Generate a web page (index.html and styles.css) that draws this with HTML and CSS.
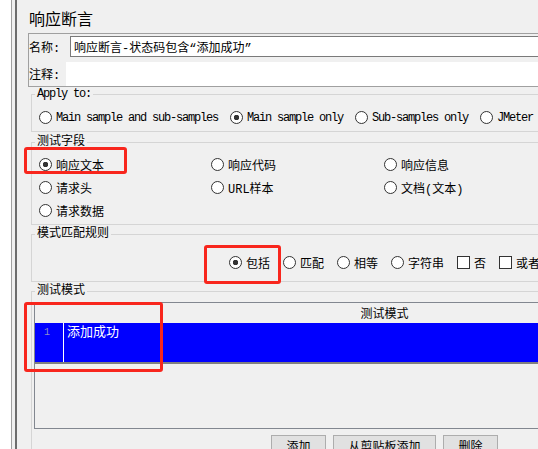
FILE: index.html
```html
<!DOCTYPE html>
<html lang="zh-CN">

<head>
    <meta charset="UTF-8">
    <meta name="viewport" content="width=device-width, initial-scale=1.0">
    <title>响应断言</title>

    <link rel="stylesheet" href="styles.css">
</head>

<body>
    <div class="window">
        <div class="main">
            <div class="content">
                <div class="title">响应断言</div>

                <div class="name-panel">
                    <div class="field-row name-row">
                        <label class="field-label">名称:</label>
                        <input class="name-input" type="text" value="响应断言-状态码包含“添加成功”" readonly>
                    </div>
                    <div class="field-row comment-row">
                        <label class="field-label">注释:</label>
                        <div class="comment-box"></div>
                    </div>
                </div>

                <fieldset class="group apply-group">
                    <legend class="mono">Apply to:</legend>
                    <div class="apply-row mono">
                        <label class="opt"><input type="radio" name="scope">Main sample and sub-samples</label>
                        <label class="opt"><input type="radio" name="scope" checked>Main sample only</label>
                        <label class="opt"><input type="radio" name="scope">Sub-samples only</label>
                        <label class="opt"><input type="radio" name="scope">JMeter Variable Name to use</label>
                    </div>
                </fieldset>

                <fieldset class="group field-group">
                    <legend>测试字段</legend>
                    <div class="field-grid">
                        <label class="opt"><input type="radio" name="field" checked>响应文本</label>
                        <label class="opt"><input type="radio" name="field">响应代码</label>
                        <label class="opt"><input type="radio" name="field">响应信息</label>
                        <label class="opt"><input type="radio" name="field">请求头</label>
                        <label class="opt"><input type="radio" name="field">URL样本</label>
                        <label class="opt"><input type="radio" name="field">文档(文本)</label>
                        <label class="opt"><input type="radio" name="field">请求数据</label>
                    </div>
                </fieldset>

                <fieldset class="group rule-group">
                    <legend>模式匹配规则</legend>
                    <div class="rule-row">
                        <label class="opt"><input type="radio" name="rule" checked>包括</label>
                        <label class="opt"><input type="radio" name="rule">匹配</label>
                        <label class="opt"><input type="radio" name="rule">相等</label>
                        <label class="opt"><input type="radio" name="rule">字符串</label>
                        <label class="opt"><input type="checkbox">否</label>
                        <label class="opt"><input type="checkbox">或者</label>
                    </div>
                </fieldset>

                <fieldset class="group test-group">
                    <legend>测试模式</legend>
                    <div class="table-wrap">
                        <div class="table-head">测试模式</div>
                        <div class="editor">
                            <div class="gutter">1</div>
                            <div class="code">添加成功</div>
                        </div>
                    </div>
                    <div class="button-row">
                        <div class="btn btn-small">添加</div>
                        <div class="btn btn-wide">从剪贴板添加</div>
                        <div class="btn btn-small">删除</div>
                    </div>
                </fieldset>
            </div>
        </div>
    </div>

    <!-- 标注框 -->
    <div class="mark mark-field"></div>
    <div class="mark mark-rule"></div>
    <div class="mark mark-pattern"></div>
</body>

</html>
```

FILE: styles.css
```css
html,
body {
    margin: 0;
    height: 100%;
    overflow: hidden;
    background-color: white;
}

body {
    position: relative;
    font-family: "Liberation Mono", "Noto Sans CJK SC", monospace;
    font-size: 12px;
    color: #000;
}

.window {
    margin-left: 11px;
    border-left: 1px solid #a0a0a0;
    padding-left: 3px;
    height: 449px;
    background-color: #f0f0f0;
    overflow: hidden;
}

.main {
    height: 100%;
    border-left: 2px solid #6d6d6d;
    padding-left: 11px;
    background-color: #f0f0f0;
}

.content {
    width: 760px;
}

.title {
    height: 33px;
    box-sizing: border-box;
    padding: 3px 0 0 1px;
    line-height: 30px;
    font-family: "Noto Sans CJK SC", sans-serif;
    font-size: 16px;
}

/* 名称 / 注释 */
.name-panel {
    border: 1px solid #a0a0a0;
    padding-top: 1px;
}

.field-row {
    display: flex;
    align-items: center;
}

.name-row {
    margin-top: 1px;
    height: 21px;
}

.name-row .field-label {
    width: 41px;
}

.name-input {
    flex: 1;
    height: 21px;
    box-sizing: border-box;
    margin: 0;
    padding: 0 3px;
    border: 1px solid #7a7a7a;
    background-color: white;
    font: inherit;
    outline: none;
}

.comment-row {
    margin-top: 5px;
    height: 24px;
}

.comment-row .field-label {
    width: 37px;
}

.comment-box {
    flex: 1;
    height: 24px;
    background-color: white;
}

/* titled groups */
.group {
    margin: 0 0 0 3px;
    padding: 0;
    min-width: 0;
    border: 1px solid #d5d5d5;
}

.group legend {
    margin-left: 3px;
    padding: 0 2px;
    height: 12px;
    line-height: 12px;
}

.mono {
    letter-spacing: -1.2px;
}

.opt {
    display: inline-flex;
    align-items: center;
    white-space: nowrap;
}

.opt input {
    appearance: none;
    -webkit-appearance: none;
    width: 13px;
    height: 13px;
    box-sizing: border-box;
    margin: 0 4px 0 0;
    border: 1px solid #333;
    background-color: white;
    flex: none;
}

.opt input[type=radio] {
    border-radius: 50%;
}

.opt input[type=radio]:checked {
    background: radial-gradient(circle, #333 0 2.5px, white 3px);
}

.apply-group {
    margin-top: 1px;
}

.apply-row {
    display: flex;
    height: 23px;
    padding: 6px 0 2px 7px;
}

.apply-row .opt {
    margin-right: 12px;
}

.field-group {
    margin-top: 4px;
}

.field-grid {
    display: grid;
    grid-template-columns: 172px 173px auto;
    grid-auto-rows: 23px;
    padding: 5px 0 2px 7px;
}

.rule-group {
    margin-top: 3px;
}

.rule-row {
    display: flex;
    height: 23px;
    padding: 11px 0 7px 197px;
}

.rule-row .opt {
    margin-right: 13px;
}

.test-group {
    margin-top: 3px;
    padding-top: 5px;
    height: 200px;
}

/* 表格 */
.table-wrap {
    margin-left: 2px;
    width: 701px;
    height: 127px;
    box-sizing: border-box;
    border: 1px solid #828790;
    background-color: #f0f0f0;
}

.table-head {
    height: 20px;
    line-height: 20px;
    text-align: center;
    font-family: "Noto Sans CJK SC", sans-serif;
}

.editor {
    display: flex;
    height: 39px;
    background-color: #0000ff;
    border-bottom: 2px solid #808080;
}

.gutter {
    width: 29px;
    box-sizing: border-box;
    padding: 2px 0 0 9px;
    border-right: 1px solid white;
    color: #8c8cc8;
    font-size: 10px;
    line-height: 16px;
}

.code {
    padding-left: 3px;
    color: white;
    font-family: "Noto Sans CJK SC", sans-serif;
    font-size: 13px;
    line-height: 16px;
}

.button-row {
    display: flex;
    justify-content: center;
    gap: 7px;
    margin: 6px 0 0 2px;
    width: 701px;
}

.btn {
    height: 23px;
    box-sizing: border-box;
    padding-top: 2px;
    border: 1px solid #adadad;
    background-color: #e1e1e1;
    line-height: 16px;
    text-align: center;
    font-family: "Noto Sans CJK SC", sans-serif;
}

.btn-small {
    width: 55px;
}

.btn-wide {
    width: 103px;
}

/* red annotation boxes */
.mark {
    position: absolute;
    box-sizing: border-box;
    border: 3px solid #f8261d;
    border-radius: 3px;
}

.mark-field {
    left: 24px;
    top: 147px;
    width: 103px;
    height: 27px;
}

.mark-rule {
    left: 204px;
    top: 245px;
    width: 77px;
    height: 39px;
}

.mark-pattern {
    left: 24px;
    top: 302px;
    width: 139px;
    height: 70px;
}
```
